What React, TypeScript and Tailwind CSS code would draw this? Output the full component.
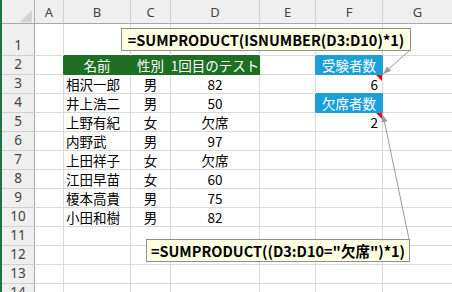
import React from 'react';

const GRID = '#d9d9d9';
const GREEN = '#1e6e24';
const BLUE = '#1c9fd8';

type Cell = { t?: string; align?: 'l' | 'c' | 'r'; fill?: 'g' | 'b'; white?: boolean; red?: boolean };

const data: Record<string, Cell> = {
  B2: { t: '名前', align: 'c', fill: 'g' },
  C2: { t: '性別', align: 'c', fill: 'g' },
  D2: { t: '1回目のテスト', align: 'c', fill: 'g' },
  F2: { t: '受験者数', align: 'c', fill: 'b' },
  F3: { t: '6', align: 'r', red: true },
  F4: { t: '欠席者数', align: 'c', fill: 'b' },
  F5: { t: '2', align: 'r', red: true },
};
const names = ['相沢一郎', '井上浩二', '上野有紀', '内野武', '上田祥子', '江田早苗', '榎本高貴', '小田和樹'];
const sex = ['男', '男', '女', '男', '女', '女', '男', '男'];
const score = ['82', '50', '欠席', '97', '欠席', '60', '75', '82'];
names.forEach((n, i) => {
  const r = i + 3;
  data['B' + r] = { t: n, align: 'l' };
  data['C' + r] = { t: sex[i], align: 'c' };
  data['D' + r] = { t: score[i], align: 'c' };
});

const cols = ['A', 'B', 'C', 'D', 'E', 'F', 'G'];

function fillOf(c: string, r: number) {
  return data[c + r]?.fill;
}

function borderColorClass(c: string, r: number) {
  const ci = cols.indexOf(c);
  const own = fillOf(c, r);
  const rightN = ci < cols.length - 1 ? fillOf(cols[ci + 1], r) : undefined;
  const belowN = fillOf(c, r + 1);
  const rf = own || rightN;
  const bf = own || belowN;
  const rc = rf === 'g' ? 'border-r-[#1e6e24]' : rf === 'b' ? 'border-r-[#1c9fd8]' : 'border-r-[#d9d9d9]';
  const bc = bf === 'g' ? 'border-b-[#1e6e24]' : bf === 'b' ? 'border-b-[#1c9fd8]' : 'border-b-[#d9d9d9]';
  return rc + ' ' + bc;
}

function RedMark() {
  return (
    <svg className="absolute right-0 top-0" width="6" height="6" viewBox="0 0 6 6">
      <polygon points="0,0 6,0 6,6" fill="#ff0000" />
    </svg>
  );
}

export default function App() {
  const rows = Array.from({ length: 14 }, (_, i) => i + 1);
  return (
    <div
      className="relative w-[452px] h-[292px] overflow-hidden bg-white border-l-2 border-l-[#217346]"
      style={{ fontFamily: '"Noto Sans CJK JP", "Noto Sans", sans-serif' }}
    >
      <div className="grid grid-cols-[33px_29px_67px_40px_89px_56px_67px_70px] grid-rows-[24px_32px_repeat(13,19px)]">
        {/* header row */}
        <div className="relative bg-[#efefef] border-r border-b border-r-[#a8a8a8] border-b-[#a8a8a8]">
          <svg className="absolute right-[2px] bottom-[1px]" width="12" height="12" viewBox="0 0 12 12">
            <polygon points="12,0 12,12 0,12" fill="#d2d2d2" />
          </svg>
        </div>
        {cols.map((c) => (
          <div
            key={c}
            className="flex items-center justify-center bg-[#efefef] border-r border-b border-r-[#d0d0d0] border-b-[#a8a8a8] text-[13px] text-[#444444] pt-[2px]"
            style={{ fontFamily: '"Noto Sans", sans-serif' }}
          >
            {c}
          </div>
        ))}
        {rows.map((r) => (
          <React.Fragment key={r}>
            <div
              className="flex items-end justify-center bg-[#efefef] border-r border-b border-r-[#a8a8a8] border-b-[#d0d0d0] text-[13.5px] leading-[18px] text-[#444444] pb-[1px]"
              style={{ fontFamily: '"Noto Sans", sans-serif' }}
            >
              {r}
            </div>
            {cols.map((c) => {
              const d = data[c + r];
              const bg = d?.fill === 'g' ? 'bg-[#1e6e24] text-white' : d?.fill === 'b' ? 'bg-[#1c9fd8] text-white' : 'text-black';
              const al = d?.align === 'l' ? 'justify-start pl-[2px]' : d?.align === 'r' ? 'justify-end pr-[4px]' : 'justify-center';
              return (
                <div
                  key={c}
                  className={`relative flex items-end whitespace-nowrap border-r border-b text-[13.5px] leading-[18px] ${al} ${bg} ${borderColorClass(c, r)}`}
                >
                  {d?.t}
                  {d?.red && <RedMark />}
                </div>
              );
            })}
          </React.Fragment>
        ))}
      </div>

      {/* arrows */}
      <svg className="absolute left-[-2px] top-0 pointer-events-none" width="452" height="292" viewBox="0 0 452 292">
        <line x1="410" y1="50" x2="388" y2="69.5" stroke="#9a9a9a" strokeWidth="1" />
        <polygon points="383,74 391,70.9 387,66.4" fill="#9a9a9a" />
        <line x1="409" y1="239" x2="384.3" y2="121" stroke="#9a9a9a" strokeWidth="1" />
        <polygon points="382,114 387.6,121.2 381.7,122.4" fill="#9a9a9a" />
      </svg>

      {/* callouts */}
      <div className="absolute left-[119px] top-[28px] w-[290px] h-[23px] flex items-center justify-center bg-[#ffffe1] border border-[#8f8f8f] text-[14.5px] font-bold text-black whitespace-nowrap">
        =SUMPRODUCT(ISNUMBER(D3:D10)*1)
      </div>
      <div className="absolute left-[144px] top-[239px] w-[264px] h-[23px] flex items-center justify-center bg-[#ffffe1] border border-[#8f8f8f] text-[14.5px] font-bold text-black whitespace-nowrap">
        =SUMPRODUCT((D3:D10="欠席")*1)
      </div>
    </div>
  );
}
